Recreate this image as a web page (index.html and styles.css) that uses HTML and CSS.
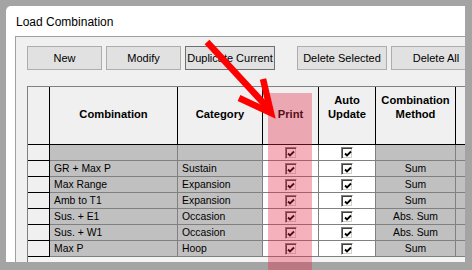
FILE: index.html
```html
<!DOCTYPE html>
<html>
<head>
  <title>Load Combination</title>
<link rel="stylesheet" href="styles.css">
</head>
<body>
<div class="frame">
  <div class="window">
    <div class="title">Load Combination</div>
    <div class="panel">
      <div class="toolbar">
        <button class="btn">New</button>
        <button class="btn">Modify</button>
        <button class="btn btn-wide btn-default">Duplicate Current</button>
        <button class="btn btn-wide btn-gap">Delete Selected</button>
        <button class="btn btn-wide">Delete All</button>
      </div>
      <div class="grid-wrap">
        <div class="grid">
          <!-- header -->
          <div class="hd"></div>
          <div class="hd">Combination</div>
          <div class="hd">Category</div>
          <div class="hd">Print</div>
          <div class="hd">Auto<br>Update</div>
          <div class="hd">Combination<br>Method</div>
          <div class="hd"></div>

          <!-- rows -->
          <div class="rh"></div>
          <div class="c"></div>
          <div class="c"></div>
          <div class="c cw"><span class="cb"><svg viewBox="0 0 8 8"><polyline points="1,3.5 3,5.5 7,1.5"/></svg></span></div>
          <div class="c cw"><span class="cb"><svg viewBox="0 0 8 8"><polyline points="1,3.5 3,5.5 7,1.5"/></svg></span></div>
          <div class="c ctr"></div>
          <div class="c"></div>

          <div class="rh"></div>
          <div class="c">GR + Max P</div>
          <div class="c">Sustain</div>
          <div class="c cw"><span class="cb"><svg viewBox="0 0 8 8"><polyline points="1,3.5 3,5.5 7,1.5"/></svg></span></div>
          <div class="c cw"><span class="cb"><svg viewBox="0 0 8 8"><polyline points="1,3.5 3,5.5 7,1.5"/></svg></span></div>
          <div class="c ctr">Sum</div>
          <div class="c"></div>

          <div class="rh"></div>
          <div class="c">Max Range</div>
          <div class="c">Expansion</div>
          <div class="c cw"><span class="cb"><svg viewBox="0 0 8 8"><polyline points="1,3.5 3,5.5 7,1.5"/></svg></span></div>
          <div class="c cw"><span class="cb"><svg viewBox="0 0 8 8"><polyline points="1,3.5 3,5.5 7,1.5"/></svg></span></div>
          <div class="c ctr">Sum</div>
          <div class="c"></div>

          <div class="rh"></div>
          <div class="c">Amb to T1</div>
          <div class="c">Expansion</div>
          <div class="c cw"><span class="cb"><svg viewBox="0 0 8 8"><polyline points="1,3.5 3,5.5 7,1.5"/></svg></span></div>
          <div class="c cw"><span class="cb"><svg viewBox="0 0 8 8"><polyline points="1,3.5 3,5.5 7,1.5"/></svg></span></div>
          <div class="c ctr">Sum</div>
          <div class="c"></div>

          <div class="rh"></div>
          <div class="c">Sus. + E1</div>
          <div class="c">Occasion</div>
          <div class="c cw"><span class="cb"><svg viewBox="0 0 8 8"><polyline points="1,3.5 3,5.5 7,1.5"/></svg></span></div>
          <div class="c cw"><span class="cb"><svg viewBox="0 0 8 8"><polyline points="1,3.5 3,5.5 7,1.5"/></svg></span></div>
          <div class="c ctr">Abs. Sum</div>
          <div class="c"></div>

          <div class="rh"></div>
          <div class="c">Sus. + W1</div>
          <div class="c">Occasion</div>
          <div class="c cw"><span class="cb"><svg viewBox="0 0 8 8"><polyline points="1,3.5 3,5.5 7,1.5"/></svg></span></div>
          <div class="c cw"><span class="cb"><svg viewBox="0 0 8 8"><polyline points="1,3.5 3,5.5 7,1.5"/></svg></span></div>
          <div class="c ctr">Abs. Sum</div>
          <div class="c"></div>

          <div class="rh"></div>
          <div class="c">Max P</div>
          <div class="c">Hoop</div>
          <div class="c cw"><span class="cb"><svg viewBox="0 0 8 8"><polyline points="1,3.5 3,5.5 7,1.5"/></svg></span></div>
          <div class="c cw"><span class="cb"><svg viewBox="0 0 8 8"><polyline points="1,3.5 3,5.5 7,1.5"/></svg></span></div>
          <div class="c ctr">Sum</div>
          <div class="c"></div>
        </div>
      </div>
    </div>
  </div>

  <!-- annotation on top of the screenshot -->
  <div class="highlight"></div>
  <svg class="arrow" width="472" height="270" viewBox="0 0 472 270">
    <line x1="207" y1="42" x2="268" y2="108" />
    <polyline points="239,98 271,113 263,79" />
  </svg>
</div>
</body>
</html>
```

FILE: styles.css
```css
  * {
    box-sizing: border-box;
    margin: 0;
    padding: 0;
  }

  body {
    font-family: 'Liberation Sans', Arial, sans-serif;
    background-color: #a4a4a4;
    color: #000;
  }

  .frame {
    position: relative;
    width: 472px;
    height: 270px;
    padding: 6px 7px 8px 6px;
    background-color: #a4a4a4;
    overflow: hidden;
  }

  .window {
    display: flex;
    flex-direction: column;
    width: 100%;
    height: 100%;
    background-color: #fff;
    border-top-left-radius: 5px;
    overflow: hidden;
  }

  .title {
    height: 30px;
    padding: 2px 0 0 10px;
    line-height: 28px;
    font-size: 12px;
    color: #000;
  }

  .panel {
    flex: 1;
    display: flex;
    flex-direction: column;
    margin-left: 9px;
    padding: 9px 0 0 11px;
    background-color: #f0f0f0;
    border-top: 1px solid #a0a0a0;
    border-left: 1px solid #a0a0a0;
    overflow: hidden;
  }

  /* Buttons */
  .toolbar {
    display: flex;
    gap: 4px;
    height: 24px;
  }

  .btn {
    flex-shrink: 0;
    width: 75px;
    height: 24px;
    font-family: 'Liberation Sans', Arial, sans-serif;
    font-size: 11px;
    color: #000;
    background-color: #e1e1e1;
    border: 1px solid #adadad;
  }

  .btn-wide {
    width: 90px;
  }

  .btn-default {
    border-color: #707070;
  }

  .btn-gap {
    margin-left: 18px;
  }

  /* Grid */
  .grid-wrap {
    flex: 1;
    margin-top: 16px;
    border-top: 1px solid #808080;
    border-left: 1px solid #808080;
    background-color: #f4f4f4;
  }

  .grid {
    display: grid;
    width: max-content;
    grid-template-columns: 22px 128px 85px 56px 57px 80px 40px;
    grid-template-rows: 58px repeat(7, 16px);
  }

  .hd {
    display: flex;
    align-items: flex-end;
    justify-content: center;
    padding-bottom: 23px;
    text-align: center;
    font-weight: bold;
    font-size: 11.2px;
    line-height: 14px;
    background-color: #f0f0f0;
    border-right: 1px solid #000;
    border-bottom: 1px solid #000;
  }

  .rh {
    background-color: #f0f0f0;
    border-right: 1px solid #000;
    border-bottom: 1px solid #000;
  }

  .c {
    display: flex;
    align-items: center;
    padding-left: 4px;
    font-size: 10.4px;
    line-height: 15px;
    white-space: nowrap;
    background-color: #c0c0c0;
    border-right: 1px solid #808080;
    border-bottom: 1px solid #808080;
  }

  .ctr {
    justify-content: center;
    padding-left: 0;
  }

  .cw {
    align-items: flex-start;
    justify-content: center;
    padding: 2px 0 0 0;
    background-color: #fff;
  }

  /* Classic sunken checkbox */
  .cb {
    display: flex;
    align-items: center;
    justify-content: center;
    width: 12px;
    height: 12px;
    background-color: #fff;
    border: 1px solid;
    border-color: #808080 #fff #fff #808080;
    box-shadow: inset 1px 1px #404040, inset -1px -1px #d4d0c8;
  }

  .cb svg {
    width: 8px;
    height: 8px;
    margin: 1px 0 0 1px;
  }

  .cb polyline {
    fill: none;
    stroke: #000;
    stroke-width: 1.8;
  }

  /* Annotation */
  .highlight {
    position: absolute;
    left: 268px;
    top: 93px;
    width: 44px;
    height: 177px;
    background-color: rgba(226, 40, 70, 0.36);
  }

  .arrow {
    position: absolute;
    left: 0;
    top: 0;
  }

  .arrow line,
  .arrow polyline {
    fill: none;
    stroke: #ff0000;
    stroke-width: 6.5;
    stroke-linejoin: miter;
    stroke-miterlimit: 10;
  }
```
